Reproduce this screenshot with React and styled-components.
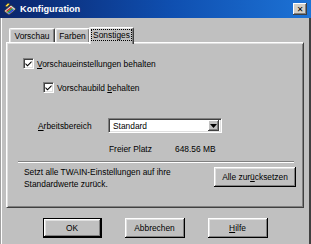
import styled, { createGlobalStyle } from 'styled-components';

const GlobalStyle = createGlobalStyle`
  html, body {
    margin: 0;
    padding: 0;
    background: #c0c0c0;
  }
  body {
    font-family: "Liberation Sans", Arial, sans-serif;
    font-size: 8.4px;
    color: #000;
  }
`;

export default function App() {
  return (
    <>
      <GlobalStyle />
      <Window>
        <TitleBar>
          <AppIcon viewBox="0 0 14 14">
            <path d="M1 9 L8 3 L13 7 L6 13 Z" fill="#d8d8d8" stroke="#303030" strokeWidth="0.8" />
            <path d="M3 9 L8 5 L9 6 L4 10 Z" fill="#e02020" />
            <path d="M4 10 L9 6 L10 7 L5 11 Z" fill="#20a020" />
            <path d="M5 11 L10 7 L11 8 L6 12 Z" fill="#2040e0" />
            <path d="M2 4 L5 1 L7 2 L4 5 Z" fill="#f0d040" stroke="#303030" strokeWidth="0.6" />
          </AppIcon>
          <Title>Konfiguration</Title>
          <CloseButton>✕</CloseButton>
        </TitleBar>
        <Body>
          <TabStrip>
            <Tab $width={46}>Vorschau</Tab>
            <Tab $width={35}>Farben</Tab>
            <Tab $width={45} $active>
              <FocusText>Sonstiges</FocusText>
            </Tab>
          </TabStrip>
          <Panel>
            <CheckRow $indent={15} $top={14}>
              <CheckBox>
                <CheckMark viewBox="0 0 7 7">
                  <path d="M0.5 3 L2.5 5 L6.5 1 L6.5 2.6 L2.5 6.6 L0.5 4.6 Z" fill="#000" />
                </CheckMark>
              </CheckBox>
              <span><u>V</u>orschaueinstellungen behalten</span>
            </CheckRow>
            <CheckRow $indent={35} $top={13}>
              <CheckBox>
                <CheckMark viewBox="0 0 7 7">
                  <path d="M0.5 3 L2.5 5 L6.5 1 L6.5 2.6 L2.5 6.6 L0.5 4.6 Z" fill="#000" />
                </CheckMark>
              </CheckBox>
              <span>Vorschaubild <u>b</u>ehalten</span>
            </CheckRow>
            <FieldRow>
              <FieldLabel><u>A</u>rbeitsbereich</FieldLabel>
              <Select>
                <SelectValue>Standard</SelectValue>
                <DropButton>
                  <svg width="7" height="4" viewBox="0 0 7 4">
                    <path d="M0 0 L7 0 L3.5 4 Z" fill="#000" />
                  </svg>
                </DropButton>
              </Select>
            </FieldRow>
            <InfoRow>
              <InfoLabel>Freier Platz</InfoLabel>
              <span>648.56 MB</span>
            </InfoRow>
            <Separator />
            <ResetRow>
              <ResetText>
                Setzt alle TWAIN-Einstellungen auf ihre
                <br />
                Standardwerte zurück.
              </ResetText>
              <Button $width={82}>Alle zur<u>ü</u>cksetzen</Button>
            </ResetRow>
          </Panel>
          <ButtonRow>
            <Button $width={59} $default>OK</Button>
            <Button $width={60}>Abbrechen</Button>
            <Button $width={60}><u>H</u>ilfe</Button>
          </ButtonRow>
        </Body>
      </Window>
    </>
  );
}

//-------------------Styled-components--------------------
const Window = styled.div`
  width: 311px;
  height: 244px;
  display: flex;
  flex-direction: column;
  background: #c0c0c0;
  overflow: hidden;
`;

const TitleBar = styled.div`
  height: 18px;
  flex: none;
  display: flex;
  align-items: center;
  padding: 0 3px 0 3px;
  background: linear-gradient(to right, #0a246a 0%, #0f4fb0 55%, #1d73d6 100%);
`;

const AppIcon = styled.svg`
  width: 14px;
  height: 14px;
  flex: none;
`;

const Title = styled.div`
  flex: 1;
  margin-left: 3px;
  color: #fff;
  font-weight: bold;
  font-size: 9.2px;
`;

const CloseButton = styled.div`
  width: 14px;
  height: 12px;
  margin-right: 1px;
  box-sizing: border-box;
  background: #d4d0c8;
  display: flex;
  align-items: center;
  justify-content: center;
  font-family: "DejaVu Sans", sans-serif;
  font-weight: bold;
  font-size: 8px;
  color: #000;
  box-shadow: inset -1px -1px #404040, inset 1px 1px #fff, inset -2px -2px #808080;
`;

const Body = styled.div`
  flex: 1;
  display: flex;
  flex-direction: column;
  padding: 9px 5px 0 5px;
  border-left: 1px solid #a0a0a0;
  border-right: 2px solid #404040;
  box-shadow: inset 1px 0 #fff;
`;

const TabStrip = styled.div`
  display: flex;
  align-items: flex-end;
  padding-left: 3px;
  margin-bottom: -2px;
  position: relative;
  z-index: 1;
`;

const Tab = styled.div`
  box-sizing: border-box;
  width: ${(p) => p.$width}px;
  height: ${(p) => (p.$active ? '17px' : '14px')};
  margin: ${(p) => (p.$active ? '0 -1px 0 -1px' : '0 0 2px 0')};
  padding-bottom: ${(p) => (p.$active ? '2px' : '0')};
  display: flex;
  align-items: center;
  justify-content: center;
  background: #c0c0c0;
  border-top: 1px solid #fff;
  border-left: 1px solid #fff;
  border-right: 1px solid #404040;
  border-radius: 2px 2px 0 0;
  box-shadow: inset -1px 0 #808080, inset 1px 1px #dfdfdf;
  line-height: 10px;
`;

const FocusText = styled.span`
  outline: 1px dotted #000;
  outline-offset: 0;
  padding: 0 1px;
`;

const Panel = styled.div`
  height: 166px;
  box-sizing: border-box;
  display: flex;
  flex-direction: column;
  border-top: 1px solid #fff;
  border-left: 1px solid #fff;
  border-right: 1px solid #404040;
  border-bottom: 1px solid #404040;
  box-shadow: inset 1px 1px #dfdfdf, inset -1px -1px #808080;
  padding: 1px;
`;

const CheckRow = styled.div`
  display: flex;
  align-items: center;
  gap: 3px;
  height: 11px;
  margin-top: ${(p) => p.$top}px;
  padding-left: ${(p) => p.$indent}px;
`;

const CheckBox = styled.div`
  width: 11px;
  height: 11px;
  box-sizing: border-box;
  background: #fff;
  display: flex;
  align-items: center;
  justify-content: center;
  border-top: 1px solid #808080;
  border-left: 1px solid #808080;
  border-right: 1px solid #fff;
  border-bottom: 1px solid #fff;
  box-shadow: inset 1px 1px #404040, inset -1px -1px #dfdfdf;
`;

const CheckMark = styled.svg`
  width: 7px;
  height: 7px;
`;

const FieldRow = styled.div`
  display: flex;
  align-items: center;
  margin-top: 25px;
  padding-left: 30px;
`;

const FieldLabel = styled.div`
  width: 70px;
`;

const Select = styled.div`
  width: 114px;
  height: 15px;
  box-sizing: border-box;
  display: flex;
  align-items: center;
  background: #fff;
  border-top: 1px solid #808080;
  border-left: 1px solid #808080;
  border-right: 1px solid #fff;
  border-bottom: 1px solid #fff;
  box-shadow: inset 1px 1px #404040, inset -1px -1px #dfdfdf;
  padding: 2px;
`;

const SelectValue = styled.div`
  flex: 1;
  padding-left: 2px;
`;

const DropButton = styled.div`
  width: 11px;
  height: 11px;
  box-sizing: border-box;
  background: #c0c0c0;
  display: flex;
  align-items: center;
  justify-content: center;
  box-shadow: inset -1px -1px #404040, inset 1px 1px #fff, inset -2px -2px #808080;
`;

const InfoRow = styled.div`
  display: flex;
  align-items: center;
  height: 11px;
  margin-top: 10px;
  padding-left: 101px;
`;

const InfoLabel = styled.div`
  width: 66px;
`;

const Separator = styled.div`
  height: 0;
  margin: 7px 8px 0 10px;
  border-top: 1px solid #808080;
  border-bottom: 1px solid #fff;
`;

const ResetRow = styled.div`
  display: flex;
  justify-content: space-between;
  align-items: flex-start;
  margin-top: 3px;
  padding: 0 6px 0 16px;
`;

const ResetText = styled.div`
  line-height: 12px;
`;

const Button = styled.div`
  width: ${(p) => p.$width}px;
  height: 20px;
  box-sizing: border-box;
  display: flex;
  align-items: center;
  justify-content: center;
  background: #c0c0c0;
  margin-top: 1px;
  border: ${(p) => (p.$default ? '1px solid #000' : 'none')};
  box-shadow: inset -1px -1px #000, inset 1px 1px #fff, inset -2px -2px #808080, inset 2px 2px #dfdfdf;
`;

const ButtonRow = styled.div`
  display: flex;
  justify-content: center;
  gap: 23px;
  margin-top: 9px;
`;
